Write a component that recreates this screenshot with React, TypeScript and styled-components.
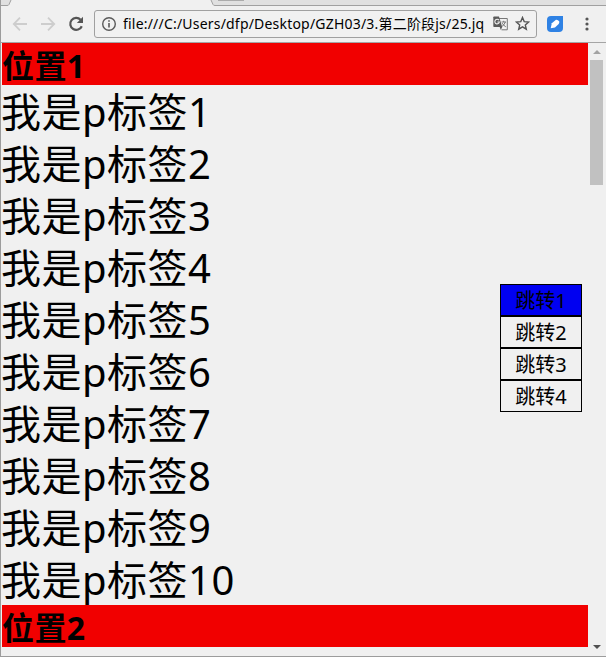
import React from "react";
import styled, { createGlobalStyle } from "styled-components";

const Global = createGlobalStyle`
  * { box-sizing: border-box; }
  body { margin: 0; background: #f0f0f0; overflow: hidden; }
`;

const Window = styled.div`
  position: relative;
  width: 606px;
  height: 657px;
  display: flex;
  flex-direction: column;
  background: #f0f0f0;
  border-left: 1px solid #9c9c9c;
  border-bottom: 1px solid #9c9c9c;
  overflow: hidden;
  color: #000;
  font-family: "Noto Sans", "Noto Sans CJK SC", sans-serif;
`;

const TabStrip = styled.svg`
  display: block;
  flex: none;
  margin-left: -1px;
`;

const Toolbar = styled.div`
  flex: none;
  height: 37px;
  display: flex;
  align-items: center;
  border-bottom: 1px solid #a5a5a5;
  padding: 0 11px 1px 11px;
`;

const Icon = styled.svg<{ $gap?: number }>`
  flex: none;
  display: block;
  margin-right: ${(p) => p.$gap ?? 0}px;
`;

const AddressBar = styled.div`
  flex: none;
  width: 443px;
  height: 28px;
  margin-right: 10px;
  padding: 0 7px 0 6px;
  display: flex;
  align-items: center;
  border: 1px solid #a0a0a0;
  border-radius: 3px;
  background: #f1f1f1;
`;

const Url = styled.span`
  flex: none;
  width: 363px;
  margin: 0 7px 0 6px;
  font-size: 14px;
  line-height: 20px;
  letter-spacing: 0.2px;
  white-space: nowrap;
  overflow: hidden;
`;

const Viewport = styled.div`
  flex: 1;
  min-height: 0;
  display: flex;
`;

const Page = styled.main`
  width: 587px;
  padding-left: 1px;
`;

const Heading = styled.h1`
  margin: 0;
  height: 42px;
  padding-top: 2px;
  background: #f10000;
  font-size: 32px;
  line-height: 42px;
  font-weight: 700;
  letter-spacing: 0.4px;
  white-space: nowrap;
`;

const Paragraph = styled.p`
  margin: 0 0 0 -1px;
  height: 52px;
  font-size: 40px;
  line-height: 54px;
  letter-spacing: 0.5px;
  white-space: nowrap;
`;

const Scrollbar = styled.div`
  width: 18px;
  padding: 7px 2px 7px 1px;
  display: flex;
  flex-direction: column;
  align-items: center;
`;

const Thumb = styled.div`
  width: 13px;
  height: 125px;
  margin: 6px 0 auto;
  background: #c1c1c1;
`;

const JumpMenu = styled.nav`
  position: absolute;
  left: 499px;
  top: 284px;
  width: 82px;
`;

const JumpItem = styled.div<{ $active: boolean }>`
  height: 32px;
  border: 1px solid #000;
  background: ${(p) => (p.$active ? "#0000f1" : "transparent")};
  font-size: 20px;
  line-height: 31px;
  text-align: center;
`;

const paragraphs = Array.from({ length: 10 }, (_, i) => i + 1);

export default function App() {
  return (
    <>
      <Global />
      <Window>
        <TabStrip width="606" height="6" viewBox="0 0 606 6">
          <path d="M0 0H11L9 4.5Q8.6 5.5 7 5.5H0Z" fill="#e0e0e0" />
          <path d="M211 0L213 4.5Q213.4 5.5 215 5.5H606V0Z" fill="#e0e0e0" />
          <path d="M11 0L9 4.5Q8.6 5.5 7 5.5H0M211 0L213 4.5Q213.4 5.5 215 5.5H606" fill="none" stroke="#a0a0a0" />
          <path d="M218 .5H244" stroke="#ababab" />
        </TabStrip>
        <Toolbar>
          <Icon width="16" height="16" viewBox="0 0 16 16" fill="none" stroke="#cdcdcd" strokeWidth="1.8" $gap={12}>
            <path d="M15 8H2M8 1.7L1.8 8L8 14.3" />
          </Icon>
          <Icon width="16" height="16" viewBox="0 0 16 16" fill="none" stroke="#cdcdcd" strokeWidth="1.8" $gap={12}>
            <path d="M1 8H14M8 1.7L14.2 8L8 14.3" />
          </Icon>
          <Icon width="17" height="16" viewBox="0 0 17 16" $gap={9}>
            <path d="M13.8 10.2A6 6 0 1 1 12.6 3.7" fill="none" stroke="#555" strokeWidth="2.2" />
            <path d="M15 .8V7H8.8Z" fill="#555" />
          </Icon>
          <AddressBar>
            <Icon width="16" height="16" viewBox="0 0 16 16">
              <circle cx="8" cy="8" r="6.3" fill="none" stroke="#5a5a5a" strokeWidth="1.4" />
              <path d="M8 7V11.5M8 4.2V5.8" stroke="#5a5a5a" strokeWidth="1.6" />
            </Icon>
            <Url>file:///C:/Users/dfp/Desktop/GZH03/3.第二阶段js/25.jq</Url>
            <Icon width="15" height="15" viewBox="0 0 15 15" $gap={7}>
              <path d="M6 2.5H14.3V13.8H8.5" fill="#f1f1f1" stroke="#777" />
              <path d="M8.5 6H13M10.7 4.8V6M12.3 6Q11.5 9 8.8 10.5M9.3 7.2Q10.5 9.5 12.8 10.8" fill="none" stroke="#777" />
              <path d="M1 .5H6L9.2 11H1Q.3 11 .3 10.2V1.3Q.3.5 1 .5Z" fill="#5a5a5a" />
              <path d="M6.7 11H9.2L7.8 14Z" fill="#5a5a5a" />
              <path d="M6 4.2A2.3 2.3 0 1 0 6.4 6H4.4" fill="none" stroke="#f1f1f1" strokeWidth="1.1" />
            </Icon>
            <Icon width="15" height="15" viewBox="0 0 15 15">
              <path d="M7.5 1.5L9.2 5.6L13.7 6L10.3 8.9L11.3 13.2L7.5 10.9L3.7 13.2L4.7 8.9L1.3 6L5.8 5.6Z" fill="none" stroke="#555" strokeWidth="1.4" />
            </Icon>
          </AddressBar>
          <Icon width="16" height="16" viewBox="0 0 16 16" $gap={22}>
            <path d="M4 0H16V12Q16 16 12 16H4Q0 16 0 12V4Q0 0 4 0Z" fill="#2f82e4" />
            <path d="M3.7 12.3L4.8 7.2L9 3.8Q11 3.6 12.3 5.6Q12.5 7 11.7 8L8 11.5Z" fill="#fff" />
          </Icon>
          <Icon width="4" height="14" viewBox="0 0 4 14" fill="#555">
            <circle cx="2" cy="2" r="1.6" />
            <circle cx="2" cy="7" r="1.6" />
            <circle cx="2" cy="12" r="1.6" />
          </Icon>
        </Toolbar>
        <Viewport>
          <Page>
            <Heading>位置1</Heading>
            {paragraphs.map((n) => (
              <Paragraph key={n}>我是p标签{n}</Paragraph>
            ))}
            <Heading>位置2</Heading>
          </Page>
          <Scrollbar>
            <Icon width="8" height="4" viewBox="0 0 8 4">
              <path d="M0 4L4 0L8 4Z" fill="#a3a3a3" />
            </Icon>
            <Thumb />
            <Icon width="8" height="4" viewBox="0 0 8 4">
              <path d="M0 0H8L4 4Z" fill="#505050" />
            </Icon>
          </Scrollbar>
        </Viewport>
        <JumpMenu>
          {[1, 2, 3, 4].map((n) => (
            <JumpItem key={n} $active={n === 1}>
              跳转{n}
            </JumpItem>
          ))}
        </JumpMenu>
      </Window>
    </>
  );
}
